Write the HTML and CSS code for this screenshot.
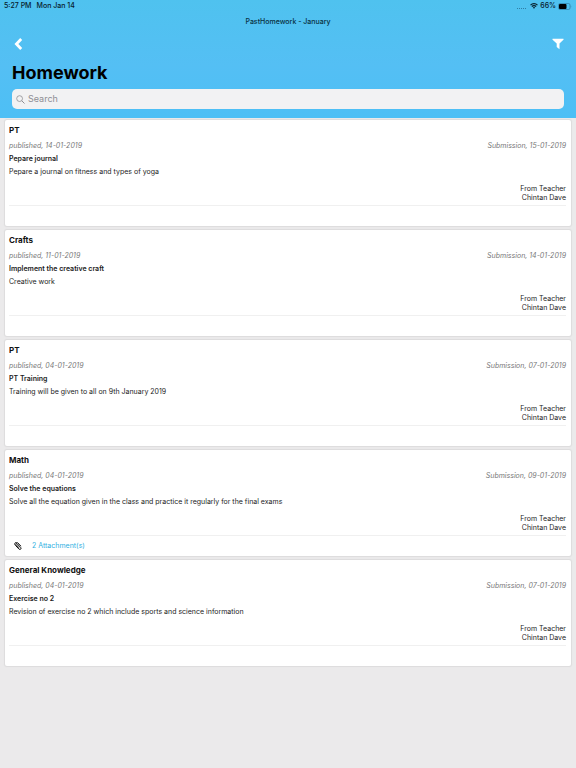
FILE: index.html
```html
<!DOCTYPE html>
<html lang="en">
<head>
    <meta charset="UTF-8">
    <meta name="viewport" content="width=device-width, initial-scale=1.0">
    <title>Homework</title>
    <link rel="stylesheet" href="styles.css">
</head>
<body>
    <header class="header">
        <div class="status-bar">
            <span>5:27 PM</span>
            <span>Mon Jan 14</span>
            <div class="status-icons">
                <span class="signal"></span>
                <svg class="wifi" viewBox="0 0 16 12" aria-hidden="true">
                    <path d="M1 4.2a10 10 0 0 1 14 0M3.6 7a6.2 6.2 0 0 1 8.8 0" fill="none" stroke="#08202c" stroke-width="2.2"/>
                    <path d="M5.6 9a3.4 3.4 0 0 1 4.8 0L8 11.6z" fill="#08202c"/>
                </svg>
                <span>66%</span>
                <svg class="battery" viewBox="0 0 28 14" aria-hidden="true">
                    <rect x="1" y="1" width="23" height="12" rx="3" fill="none" stroke="#2f7fa6" stroke-width="1.4"/>
                    <rect x="2" y="2" width="15" height="10" rx="2" fill="#000"/>
                    <path d="M25.5 4.5q2 2.5 0 5z" fill="#2f7fa6"/>
                </svg>
            </div>
        </div>
        <p class="nav-title">PastHomework - January</p>
        <div class="nav-buttons">
            <button type="button" class="icon-button" aria-label="Back">
                <svg width="9" height="12" viewBox="0 0 9 12"><path d="M7.2 1 2.4 6l4.8 5" fill="none" stroke="#fff" stroke-width="2.8"/></svg>
            </button>
            <button type="button" class="icon-button" aria-label="Filter">
                <svg width="12" height="12" viewBox="0 0 12 12"><path d="M.6.8h10.8q.5.3 0 .9L7.5 5.6v5.600L4.700 9V5.600L.6 1.700Q.1 1.100.6.8z" fill="#fff"/></svg>
            </button>
        </div>
        <h1>Homework</h1>
        <label class="search">
            <svg width="9" height="9" viewBox="0 0 9 9" aria-hidden="true"><circle cx="3.6" cy="3.6" r="2.9" fill="none" stroke="#8e8e93" stroke-width=".8"/><path d="m5.7 5.7 2.8 2.8" stroke="#8e8e93"/></svg>
            <input type="search" placeholder="Search" aria-label="Search">
        </label>
    </header>

    <main class="list">
        <article class="card">
            <h2>PT</h2>
            <div class="dates"><span>published, 14-01-2019</span><span>Submission, 15-01-2019</span></div>
            <h3>Pepare journal</h3>
            <p>Pepare a journal on fitness and types of yoga</p>
            <div class="teacher">From Teacher<br>Chintan Dave</div>
            <footer></footer>
        </article>
        <article class="card">
            <h2>Crafts</h2>
            <div class="dates"><span>published, 11-01-2019</span><span>Submission, 14-01-2019</span></div>
            <h3>Implement the creative craft</h3>
            <p>Creative work</p>
            <div class="teacher">From Teacher<br>Chintan Dave</div>
            <footer></footer>
        </article>
        <article class="card">
            <h2>PT</h2>
            <div class="dates"><span>published, 04-01-2019</span><span>Submission, 07-01-2019</span></div>
            <h3>PT Training</h3>
            <p>Training will be given to all on 9th January 2019</p>
            <div class="teacher">From Teacher<br>Chintan Dave</div>
            <footer></footer>
        </article>
        <article class="card">
            <h2>Math</h2>
            <div class="dates"><span>published, 04-01-2019</span><span>Submission, 09-01-2019</span></div>
            <h3>Solve the equations</h3>
            <p>Solve all the equation given in the class and practice it regularly for the final exams</p>
            <div class="teacher">From Teacher<br>Chintan Dave</div>
            <footer>
                <svg width="8" height="8" viewBox="0 0 16 16" aria-hidden="true"><path d="M9.5 11 4 5.2C2.7 3.8 4.6 2 6 3.3l7.3 7.6c2.3 2.5-1 5.6-3.4 3.2L2.6 6.5C-.8 2.8 4.2-1.6 7.5 1.7l5.8 6" fill="none" stroke="#111" stroke-width="2" stroke-linecap="round"/></svg>
                <a href="#attachments">2 Attachment(s)</a>
            </footer>
        </article>
        <article class="card">
            <h2>General Knowledge</h2>
            <div class="dates"><span>published, 04-01-2019</span><span>Submission, 07-01-2019</span></div>
            <h3>Exercise no 2</h3>
            <p>Revision of exercise no 2 which include sports and science information</p>
            <div class="teacher">From Teacher<br>Chintan Dave</div>
            <footer></footer>
        </article>
    </main>
</body>
</html>
```

FILE: styles.css
```css
* { box-sizing: border-box; }

body {
  margin: 0;
  min-height: 100vh;
  background: #ebeaeb;
  color: #1c1c1c;
  font: 7px/12px Inter, "Liberation Sans", sans-serif;
}

h1, h2, h3, p { margin: 0; }

/* Header */

.header {
  padding: 0 12px 9px;
  background: linear-gradient(#4fc2ef, #54bff4 55%, #4dbff5);
}

.status-bar {
  display: flex;
  gap: 5px;
  height: 12px;
  margin: 0 -8px;
  color: #08202c;
  font-weight: 500;
}

.status-icons {
  display: flex;
  align-items: center;
  gap: 2px;
  margin-left: auto;
}

.signal {
  width: 9px;
  margin-top: 4px;
  margin-right: 2px;
  border-top: 1px dotted #2f7fa6;
}

.wifi {
  width: 8px;
  height: 6px;
}

.battery {
  width: 14px;
  height: 7px;
}

.nav-title {
  margin-top: 4px;
  color: #08303f;
  font-weight: 500;
  text-align: center;
}

.nav-buttons {
  display: flex;
  justify-content: space-between;
  margin: 8px -1px 0 1px;
}

.icon-button {
  display: flex;
  align-items: center;
  height: 16px;
  padding: 0 1px;
  border: 0;
  background: none;
}

h1 {
  margin: 9px 0 4px;
  color: #000;
  font-size: 18px;
  font-weight: 700;
  line-height: 24px;
}

.search {
  display: flex;
  align-items: center;
  gap: 3px;
  height: 20px;
  padding: 0 4px;
  border-radius: 5px;
  background: #f2f2f3;
}

.search input {
  flex: 1;
  min-width: 0;
  padding: 0;
  border: 0;
  outline: 0;
  background: none;
  font: 9px/16px Inter, "Liberation Sans", sans-serif;
}

.search input::placeholder { color: #8e8e93; }

/* Homework cards */

.list {
  display: grid;
  gap: 4px;
  padding: 2px 5px;
}

.card {
  padding: 2px 5px 0 4px;
  border-radius: 2px;
  background: #fff;
  box-shadow: 0 0 1px 1px #dddcdd;
}

.card h2 {
  color: #111;
  font-size: 8px;
  font-weight: 700;
  line-height: 16px;
}

.dates {
  display: flex;
  justify-content: space-between;
  margin: 2px 0 1px;
  color: #777;
  font-style: italic;
}

.card h3 {
  font-size: 7px;
  font-weight: 600;
}

.card p { margin: 1px 0 6px; }

.teacher {
  line-height: 9px;
  text-align: right;
}

.card footer {
  display: flex;
  align-items: center;
  gap: 10px;
  height: 21px;
  margin-top: 3px;
  padding-left: 5px;
  border-top: 1px solid #f0f0f0;
}

.card a {
  color: #2fb0df;
  text-decoration: none;
}
```
